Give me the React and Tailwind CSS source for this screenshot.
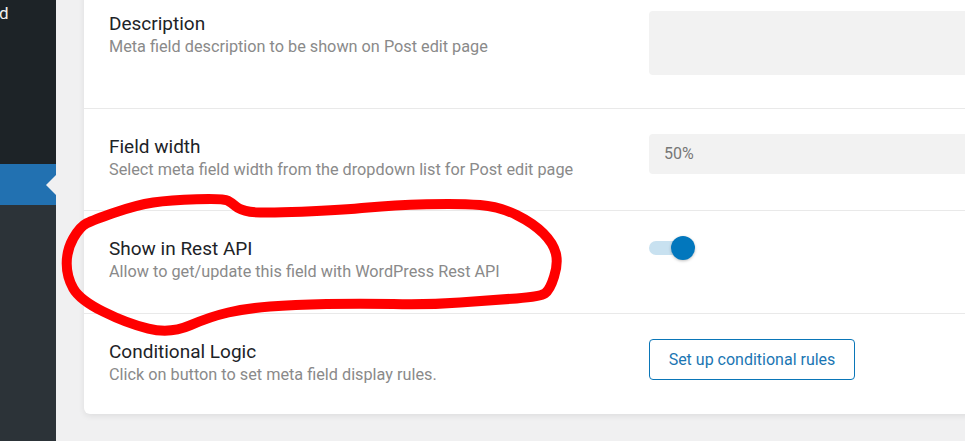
import React from "react";

const pts = [
  [136.7, 205], [170, 200], [223.3, 198.3], [232, 203], [240, 210], [260, 213.3], [343.3, 210],
  [393.3, 205], [460, 203.3], [500, 206.7], [533.3, 223.3], [553.3, 243.3], [558.3, 263.3],
  [550, 290], [540, 296.7], [493.3, 300], [426.7, 305], [360, 303.3], [293.3, 305],
  [246.7, 308.3], [210, 316.7], [170, 334], [126.7, 323.3], [80, 300], [66.7, 276.7],
  [66.7, 250], [80, 226.7], [93.3, 220],
];

function smoothClosed(p) {
  const n = p.length;
  const mid = (a, b) => [(a[0] + b[0]) / 2, (a[1] + b[1]) / 2];
  const m0 = mid(p[n - 1], p[0]);
  let d = `M${m0[0].toFixed(1)},${m0[1].toFixed(1)}`;
  for (let i = 0; i < n; i++) {
    const c = p[i];
    const m = mid(p[i], p[(i + 1) % n]);
    d += ` Q${c[0].toFixed(1)},${c[1].toFixed(1)} ${m[0].toFixed(1)},${m[1].toFixed(1)}`;
  }
  return d + " Z";
}

function Label({ title, desc }) {
  return (
    <div className="w-[565px] shrink-0 pl-[25px]">
      <div className="text-[19px] leading-[26px] text-[#1d2327]">{title}</div>
      <div className="text-[16.25px] leading-[20px] text-[#8a8a8a]">{desc}</div>
    </div>
  );
}

export default function App() {
  return (
    <div
      className="relative flex h-[441px] w-[965px] overflow-hidden bg-[#f0f0f1]"
      style={{ fontFamily: "Roboto, 'Noto Sans', sans-serif" }}
    >
      <aside className="flex w-[56px] shrink-0 flex-col">
        <div className="h-[164px] bg-[#1d2327]">
          <div className="-ml-[1px] pt-[3px] text-[17px] leading-[20px] text-[#f0f0f1]">d</div>
        </div>
        <div className="relative h-[41px] bg-[#2271b1]">
          <div className="absolute right-0 top-[11px] h-0 w-0 border-y-[10px] border-r-[10px] border-y-transparent border-r-[#f0f0f1]" />
        </div>
        <div className="flex-1 bg-[#2c3338]" />
      </aside>

      <main className="flex-1 pl-[28px]">
        <div className="-mt-[14px] w-[1000px] rounded-[6px] bg-white shadow-[0_2px_6px_rgba(0,0,0,0.08)]">
          <div className="flex h-[122px] pt-[25px]">
            <Label title="Description" desc="Meta field description to be shown on Post edit page" />
            <div className="h-[64px] w-[420px] rounded-[4px] bg-[#f2f2f2]" />
          </div>

          <div className="flex h-[102px] border-t border-[#e9e9e9] pt-[25px]">
            <Label title="Field width" desc="Select meta field width from the dropdown list for Post edit page" />
            <div className="flex h-[40px] w-[420px] items-center rounded-[4px] bg-[#f2f2f2] pl-[15px] text-[16px] text-[#777777]">
              50%
            </div>
          </div>

          <div className="flex h-[103px] border-t border-[#e9e9e9] pt-[25px]">
            <Label title="Show in Rest API" desc="Allow to get/update this field with WordPress Rest API" />
            <div className="relative h-[24px] w-[46px]">
              <div className="absolute left-0 top-[5px] h-[14px] w-[40px] rounded-full bg-[#c8e1f0]" />
              <div className="absolute left-[21.5px] top-0 h-[24px] w-[24px] rounded-full bg-[#0277bd] shadow-[0_1px_3px_rgba(0,0,0,0.25)]" />
            </div>
          </div>

          <div className="flex h-[101px] border-t border-[#e9e9e9] pt-[25px]">
            <Label title="Conditional Logic" desc="Click on button to set meta field display rules." />
            <button className="flex h-[41px] w-[206px] items-center justify-center rounded-[4px] border border-[#0a76b8] bg-white text-[16px] text-[#1b76b3]">
              Set up conditional rules
            </button>
          </div>
        </div>
      </main>

      <svg className="pointer-events-none absolute left-0 top-0" width="965" height="441" viewBox="0 0 965 441">
        <path d={smoothClosed(pts)} fill="none" stroke="#ff0000" strokeWidth="10" strokeLinejoin="round" strokeLinecap="round" />
      </svg>
    </div>
  );
}
